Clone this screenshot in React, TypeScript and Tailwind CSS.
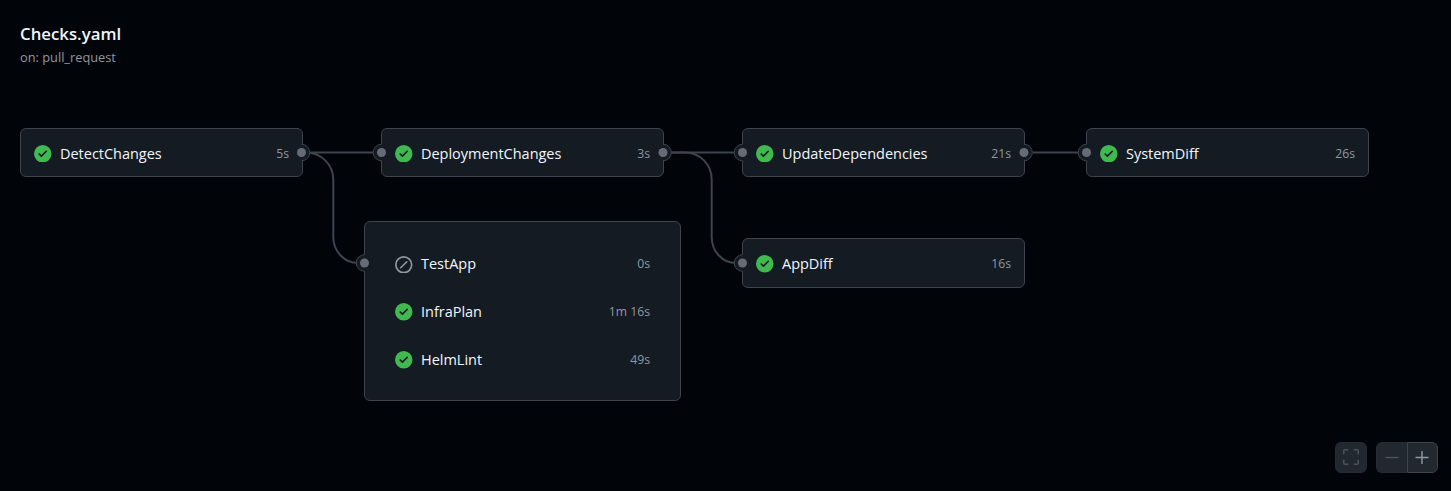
import React from "react";

type Status = "success" | "skipped";

interface Job {
  name: string;
  time: string;
  status?: Status;
}

function StatusIcon({ status = "success" }: { status?: Status }) {
  return status === "success" ? (
    <svg viewBox="0 0 16 16" className="mr-[0.5px] size-[17.5px] shrink-0 fill-[#3fb950]">
      <path d="M8 16A8 8 0 1 1 8 0a8 8 0 0 1 0 16Zm3.78-9.72a.751.751 0 0 0-.018-1.042.751.751 0 0 0-1.042-.018L6.75 9.19 5.28 7.72a.751.751 0 0 0-1.042.018.751.751 0 0 0-.018 1.042l2 2a.75.75 0 0 0 1.06 0Z" />
    </svg>
  ) : (
    <svg viewBox="0 0 16 16" className="mr-[0.5px] mt-px size-[17.5px] shrink-0 fill-[#9198a1]">
      <path d="M8 0a8 8 0 1 1 0 16A8 8 0 0 1 8 0ZM1.5 8a6.5 6.5 0 1 0 13 0 6.5 6.5 0 0 0-13 0Zm9.78-2.22-5.5 5.5a.749.749 0 0 1-1.275-.326.749.749 0 0 1 .215-.734l5.5-5.5a.751.751 0 0 1 1.042.018.751.751 0 0 1 .018 1.042Z" />
    </svg>
  );
}

function JobRow({ name, time, status }: Job) {
  return (
    <div className="flex h-5 w-full items-center">
      <StatusIcon status={status} />
      <span className="ml-[8px] flex-1 text-[14.5px] leading-5 tracking-[-0.02px] text-[#f0f6fc]">{name}</span>
      <span className="text-[12.2px] leading-5 text-[#9198a1]">{time}</span>
    </div>
  );
}

function Card({ place, job }: { place: string; job: Job }) {
  return (
    <div className={`absolute flex w-[283px] items-center rounded-[6px] border border-[#3d444d] bg-[#151b23] px-[13px] ${place}`}>
      <JobRow {...job} />
    </div>
  );
}

function Port({ x, y, side }: { x: number; y: number; side: "left" | "right" }) {
  const sweep = side === "right" ? 1 : 0;
  return (
    <g>
      <circle cx={x} cy={y} r={8.3} fill="#151b23" />
      <path d={`M${x} ${y - 8.3}A8.3 8.3 0 0 ${sweep} ${x} ${y + 8.3}`} fill="none" stroke="#3d444d" />
      <circle cx={x} cy={y} r={4.5} fill="#656c76" />
    </g>
  );
}

const group: Job[] = [
  { name: "TestApp", time: "0s", status: "skipped" },
  { name: "InfraPlan", time: "1m 16s" },
  { name: "HelmLint", time: "49s" },
];

export default function App() {
  return (
    <main className="relative h-[491px] w-[1451px] overflow-hidden bg-[#010409] font-['Open_Sans','Noto_Sans',sans-serif]">
      <header className="flex flex-col pl-5 pt-[22px]">
        <h1 className="text-[16.8px] font-semibold leading-6 text-[#f0f6fc]">Checks.yaml</h1>
        <p className="text-[12.8px] leading-[23px] text-[#9198a1]">on: pull_request</p>
      </header>

      <svg className="absolute left-0 top-0" width="1451" height="491" fill="none" stroke="#3d444d" strokeWidth="2">
        <path d="M310 152.5H373M671 152.5H734M1033 152.5H1078" />
        <path d="M306 152.5C321 152.5 333.3 164.5 333.3 179.5V237C333.3 251 344 263 358 263" />
        <path d="M671 152.5H685C700 152.5 711.7 164.5 711.7 179.5V237C711.7 251 722 263 736 263" />
      </svg>

      <Card place="left-[20px] top-[128px] h-[49px] pt-[2px]" job={{ name: "DetectChanges", time: "5s" }} />
      <Card place="left-[381px] top-[128px] h-[49px] pt-[2px]" job={{ name: "DeploymentChanges", time: "3s" }} />
      <Card place="left-[742px] top-[128px] h-[49px] pt-[2px]" job={{ name: "UpdateDependencies", time: "21s" }} />
      <Card place="left-[1086px] top-[128px] h-[49px] pt-[2px]" job={{ name: "SystemDiff", time: "26s" }} />
      <Card place="left-[742px] top-[238px] h-[50px] pt-[2px]" job={{ name: "AppDiff", time: "16s" }} />

      <div className="absolute left-[364px] top-[221px] flex h-[180px] w-[317px] flex-col gap-[28px] rounded-[6px] border border-[#3d444d] bg-[#151b23] px-[30px] pt-[32px]">
        {group.map((job) => (
          <JobRow key={job.name} {...job} />
        ))}
      </div>

      <svg className="absolute left-0 top-0" width="1451" height="491">
        <Port x={301.5} y={152.5} side="right" />
        <Port x={381.5} y={152.5} side="left" />
        <Port x={663} y={152.5} side="right" />
        <Port x={742.5} y={152.5} side="left" />
        <Port x={1024} y={152.5} side="right" />
        <Port x={1086.5} y={152.5} side="left" />
        <Port x={364.5} y={263} side="left" />
        <Port x={742.5} y={263} side="left" />
      </svg>

      <div className="absolute left-[1335px] top-[442px] flex gap-[9px]">
        <button aria-label="Fit" className="flex h-[31px] w-8 items-center justify-center rounded-[6px] border border-[#262c36] bg-[#212830]">
          <svg viewBox="0 0 16 16" className="-mt-px size-4 fill-[#4b535d]">
            <path d="M1.75 1.5a.25.25 0 0 0-.25.25v3.5H0v-3.5C0 .784.784 0 1.75 0h3.5v1.5ZM10.75 0h3.5C15.216 0 16 .784 16 1.75v3.5h-1.5v-3.5a.25.25 0 0 0-.25-.25h-3.5ZM0 10.75h1.5v3.5c0 .138.112.25.25.25h3.5V16h-3.5A1.75 1.75 0 0 1 0 14.25Zm14.5 0H16v3.5A1.75 1.75 0 0 1 14.25 16h-3.5v-1.5h3.5a.25.25 0 0 0 .25-.25Z" />
          </svg>
        </button>
        <div className="flex">
          <button aria-label="Zoom out" className="flex h-[31px] w-[31px] items-center justify-center rounded-l-[6px] border border-r-0 border-[#262c36] bg-[#212830]">
            <svg viewBox="0 0 14 14" className="size-[14px]">
              <path d="M.5 6.5h13" stroke="#4b535d" strokeWidth="1.4" />
            </svg>
          </button>
          <button aria-label="Zoom in" className="flex h-[31px] w-[31px] items-center justify-center rounded-r-[6px] border border-[#3d444d] bg-[#212830] pr-px">
            <svg viewBox="0 0 14 14" className="size-[14px]">
              <path d="M.5 6.5h13M7 0v13" stroke="#9198a1" strokeWidth="1.4" />
            </svg>
          </button>
        </div>
      </div>
    </main>
  );
}
